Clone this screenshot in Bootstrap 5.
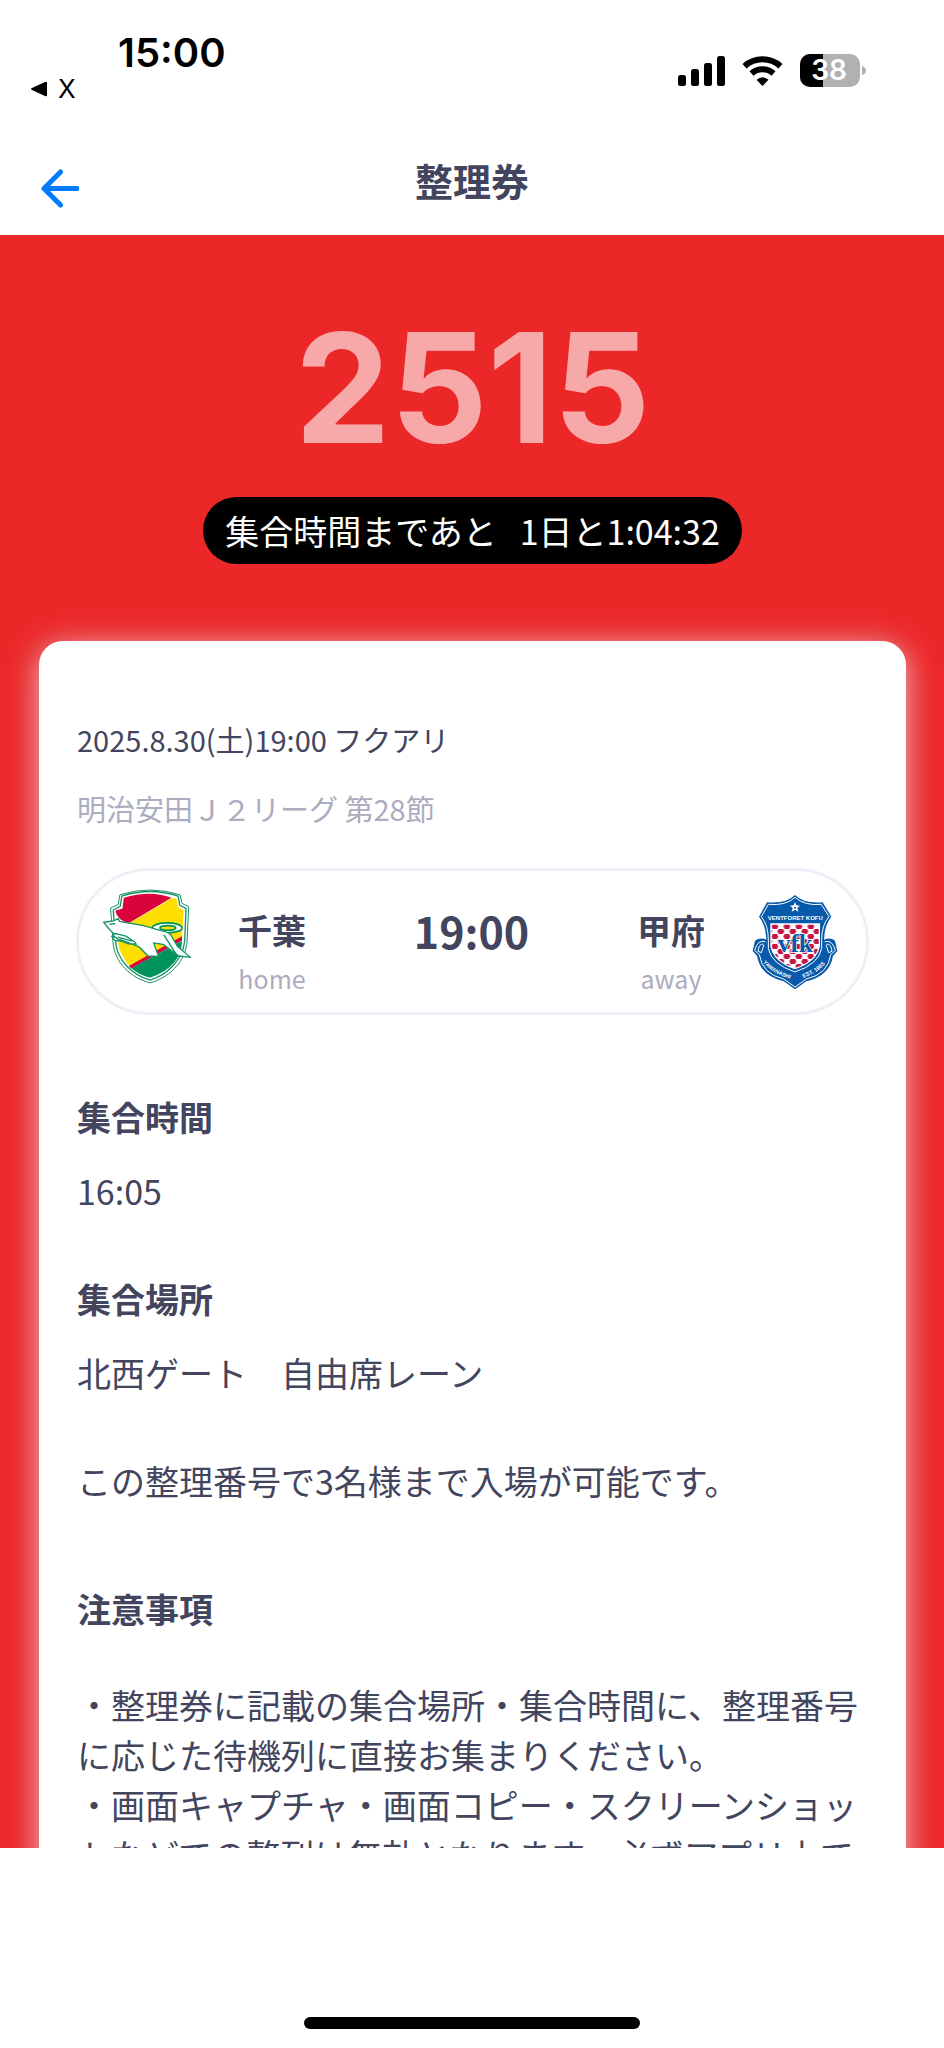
<!DOCTYPE html>
<html lang="ja">
<head>
<meta charset="utf-8">
<meta name="viewport" content="width=device-width, initial-scale=1">
<title>整理券</title>
<link href="https://cdn.jsdelivr.net/npm/bootstrap@5.3.0/dist/css/bootstrap.min.css" rel="stylesheet">
<style>
  :root { --ink: #42455d; --muted: #acacc0; --brand: #ec2728; }
  body { font-family: "Noto Sans CJK JP", sans-serif; color: var(--ink); background: #fff; }
  .status-bar, .ticket-number { font-family: Inter, "Liberation Sans", sans-serif; }
  .status-bar { height: 112px; padding: 29px 78px 0 30px; color: #000; }
  .clock { font-size: 40px; line-height: 48px; font-weight: 600; padding-left: 88px; }
  .back-app { font-size: 26px; line-height: 24px; gap: 10px; color: #000; }
  .status-icons { gap: 16px; padding-top: 25px; }
  .title-bar { padding: 40px 39px 27px; }
  .title-bar > * { flex: 1 1 0; }
  .title-bar h1 { font-size: 38px; line-height: 56px; font-weight: 700; }
  .ticket-area { flex: 1 1 0; min-height: 0; background: var(--brand); padding: 0 38px 0 39px; }
  .ticket-summary { padding: 78px 0 77px; gap: 34px; }
  .ticket-number { font-size: 152px; line-height: 150px; font-weight: 700; color: rgba(255, 255, 255, .6); }
  .countdown { font-size: 34px; line-height: 49px; padding: 9px 22px; white-space: pre; }
  .ticket-card { border-radius: 24px; padding: 76px 38px 60px; box-shadow: 0 6px 32px rgba(232, 234, 245, .8); }
  .meta-line { font-size: 29px; line-height: 44px; margin: 0 0 25px; }
  .muted-text { color: var(--muted); }
  .match-box { border: 3px solid #f0eff8; border-radius: 74px; height: 147px; margin: 38px -1px 77px; padding: 0 28px 0 24px; gap: 47px; }
  .home-crest { margin-bottom: 10px; }
  .team-row { padding-top: 35px; }
  .team { font-size: 34px; line-height: 48px; font-weight: 700; }
  .side { font-size: 25px; line-height: 48px; }
  .kickoff { font-size: 43px; line-height: 48px; font-weight: 700; }
  .block-text, .block-title { font-size: 34px; line-height: 50px; margin: 0; }
  .block-title { font-weight: 700; margin-bottom: 24px; }
  .block-text + .block-title, .block-text + .block-text { margin-top: 58px; }
  .block-text + .notice-title { margin: 78px 0 46px; }
  .home-area { height: 200px; padding-bottom: 19px; }
  .home-bar { width: 336px; height: 12px; }
</style>
</head>
<body class="vh-100 d-flex flex-column overflow-hidden">
<header class="flex-shrink-0">
  <div class="status-bar d-flex justify-content-between">
    <div>
      <div class="clock">15:00</div>
      <a href="#" class="back-app d-flex align-items-center text-decoration-none">
        <svg width="18" height="18" viewBox="0 0 18 18" aria-hidden="true"><path d="M2 8 15 2Q17 1 17 3V15Q17 17 15 16L2 10Q0 9 2 8Z"/></svg>
        <span>X</span>
      </a>
    </div>
    <div class="status-icons d-flex align-items-start">
      <svg width="48" height="34" viewBox="0 0 48 34" aria-label="signal"><rect x="0" y="21" width="8" height="11" rx="2.500"/><rect x="13" y="15" width="8" height="17" rx="2.500"/><rect x="26" y="9" width="8" height="23" rx="2.500"/><rect x="39" y="2" width="8" height="30" rx="2.500"/></svg>
      <svg width="42" height="34" viewBox="0 0 42 34" aria-label="Wi-Fi"><g fill="none" stroke="#000" stroke-width="6"><path d="M2.500 12.200A27 27 0 0 1 38.500 12.200"/><path d="M9.500 19.500A16.500 16.500 0 0 1 31.500 19.500"/></g><path d="M14.500 25.800Q20.500 20.500 26.500 25.800L20.500 32Z"/></svg>
      <svg width="66" height="34" viewBox="0 0 66 34" aria-label="battery"><defs><clipPath id="cell"><rect width="60" height="33" rx="10"/></clipPath></defs><g clip-path="url(#cell)"><rect width="60" height="33" fill="#b1b1b3"/><rect width="23" height="33"/></g><path d="M62 12Q66 13 66 16.500T62 21Z" fill="#b1b1b3"/><text x="29" y="26" text-anchor="middle" font-size="28" font-weight="600" fill="#fff">38</text></svg>
    </div>
  </div>
  <nav class="title-bar d-flex align-items-end" aria-label="整理券">
    <div class="d-flex">
      <button type="button" class="btn p-0 border-0 lh-1" aria-label="戻る">
        <svg width="40" height="40" viewBox="0 0 40 40" fill="none" stroke="#007aff" stroke-width="5" stroke-linecap="round" stroke-linejoin="round"><path d="M21.500 4 5 20.500 21.500 37M5 20.500H38"/></svg>
      </button>
    </div>
    <h1 class="m-0 text-center">整理券</h1>
    <div></div>
  </nav>
</header>

<main class="ticket-area overflow-hidden">
  <div class="ticket-summary d-flex flex-column align-items-center">
    <div class="ticket-number">2515</div>
    <div class="countdown rounded-pill bg-black text-white">集合時間まであと   1日と1:04:32</div>
  </div>
  <section class="ticket-card bg-white">
    <p class="meta-line">2025.8.30(土)19:00 フクアリ</p>
    <p class="meta-line muted-text">明治安田Ｊ２リーグ 第28節</p>

    <div class="match-box d-flex align-items-center">
      <svg class="home-crest flex-shrink-0" width="88" height="95" viewBox="100 84 266 286" aria-label="千葉">
        <path d="M151 101Q242 72 333 101L339 127 359 137 354 242C349 307 296 353 242 367C186 353 133 306 130 242L123 141 146 130Z" fill="#fff" stroke="#159263" stroke-width="3"/>
        <path d="M157 105Q242 77 327 105L332 133 351 142 347 240C341 300 292 343 242 359C190 344 141 300 138 240L131 147 152 136Z" fill="#fff" stroke="#159263" stroke-width="4"/>
        <path d="M163 110Q242 86 307 110L179 186Q145 181 137 149L159 142Z" fill="#d9043d"/>
        <path d="M309 111 322 112 328 140 344 147 339 228 180 316Q149 282 145 240L150 197 179 188Z" fill="#ffdf00"/>
        <path d="M339 226V239L186 324 178 316Z" fill="#d9043d"/>
        <path d="M339 240Q337 319 242 352 207 342 186 323Z" fill="#00945c"/>
        <ellipse cx="294" cy="201" rx="45" ry="15" fill="#fff" stroke="#00945c" stroke-width="5"/><ellipse cx="296" cy="201" rx="24" ry="7" fill="#ffdf00" stroke="#00945c" stroke-width="5"/>
        <path d="M102 184 132 180 146 173 150 181 223 194 275 209Q293 211 305 222L325 257 364 290 329 286 282 251 253 247 268 287 236 286 211 260 174 243 135 239 127 227 145 229 130 216 119 205Z" fill="#fff" stroke="#159263" stroke-width="4"/>
        <path d="M139 218 169 226 194 242 200 250 176 249 148 237 130 224Z" fill="#fff" stroke="#159263" stroke-width="4"/>
        <path d="M145 229 188 241M150 236 181 247M284 222 323 283M120 190 137 188" fill="none" stroke="#159263" stroke-width="4"/>
      </svg>
      <div class="team-row flex-grow-1 align-self-start d-flex justify-content-between">
        <div class="text-center"><div class="team">千葉</div><div class="side muted-text">home</div></div>
        <div class="kickoff">19:00</div>
        <div class="text-center"><div class="team">甲府</div><div class="side muted-text">away</div></div>
      </div>
      <svg class="flex-shrink-0" width="86" height="96" viewBox="158 100 258 288" aria-label="甲府">
        <defs>
          <pattern id="check" x="216" y="190" width="36" height="30" patternUnits="userSpaceOnUse"><rect width="36" height="30" fill="#fff"/><path d="M4 0H17L21 7 17 15H4L0 7ZM22 15H35L39 22 35 30H22L18 22ZM-14 15H-1L3 22-1 30H-14Z" fill="#c8123f"/></pattern>
          <path id="arcL" d="M184 296Q212 338 284 358"/><path id="arcR" d="M292 358Q360 340 390 294"/>
        </defs>
        <path d="M287 103Q314 130 370 125L396 168Q376 192 374 237 394 229 407 240L414 271 401 286Q391 346 321 362L287 386 253 362Q184 346 173 286L160 271 167 240Q182 229 201 237 199 192 179 168L203 125Q260 130 287 103Z" fill="#0759a9"/>
        <path d="M287 110Q316 136 366 131L389 168Q367 193 367 238V264Q357 311 287 334 217 311 207 264V238Q207 193 186 168L207 131Q260 136 287 110Z" fill="#0759a9" stroke="#fff" stroke-width="3"/>
        <path d="M215 190H360V256Q352 302 287 324 223 302 215 256Z" fill="url(#check)" stroke="#fff" stroke-width="4"/>
        <path d="M198 243Q175 236 166 269L180 282Q189 340 253 355L287 379 321 355Q387 340 394 282L408 269Q399 236 376 243M192 250Q178 250 176 272L186 276 194 252M382 250Q396 250 398 272L388 276 380 252" fill="none" stroke="#fff" stroke-width="3"/>
        <path d="M287 124 291 134 302 135 294 142 297 153 287 147 277 153 280 142 272 135 283 134Z" fill="#fff"/><circle cx="287" cy="141" r="3" fill="#0759a9"/>
        <g font-family="'Liberation Sans Narrow','Liberation Sans',sans-serif" font-weight="700" fill="#fff" text-anchor="middle"><text x="288" y="179" font-size="18">VENTFORET KOFU</text>
        <text font-size="16"><textPath href="#arcL" startOffset="50%">YAMANASHI</textPath></text><text font-size="17"><textPath href="#arcR" startOffset="50%">EST. 1965</textPath></text></g>
        <text x="288" y="273" text-anchor="middle" font-family="'Liberation Serif',serif" font-weight="700" font-size="76" fill="#0759a9" stroke="#fff" stroke-width="4" paint-order="stroke">vfk</text>
      </svg>
    </div>

    <h2 class="block-title">集合時間</h2>
    <p class="block-text">16:05</p>
    <h2 class="block-title">集合場所</h2>
    <p class="block-text">北西ゲート　自由席レーン</p>
    <p class="block-text">この整理番号で3名様まで入場が可能です。</p>
    <h2 class="block-title notice-title">注意事項</h2>
    <p class="block-text">・整理券に記載の集合場所・集合時間に、整理番号に応じた待機列に直接お集まりください。<br>・画面キャプチャ・画面コピー・スクリーンショットなどでの整列は無効となります。必ずアプリ上で</p>
  </section>
</main>

<footer class="home-area flex-shrink-0 d-flex justify-content-center align-items-end">
  <div class="home-bar rounded-pill bg-black"></div>
</footer>
<script src="https://cdn.jsdelivr.net/npm/bootstrap@5.3.0/dist/js/bootstrap.bundle.min.js"></script>
</body>
</html>
